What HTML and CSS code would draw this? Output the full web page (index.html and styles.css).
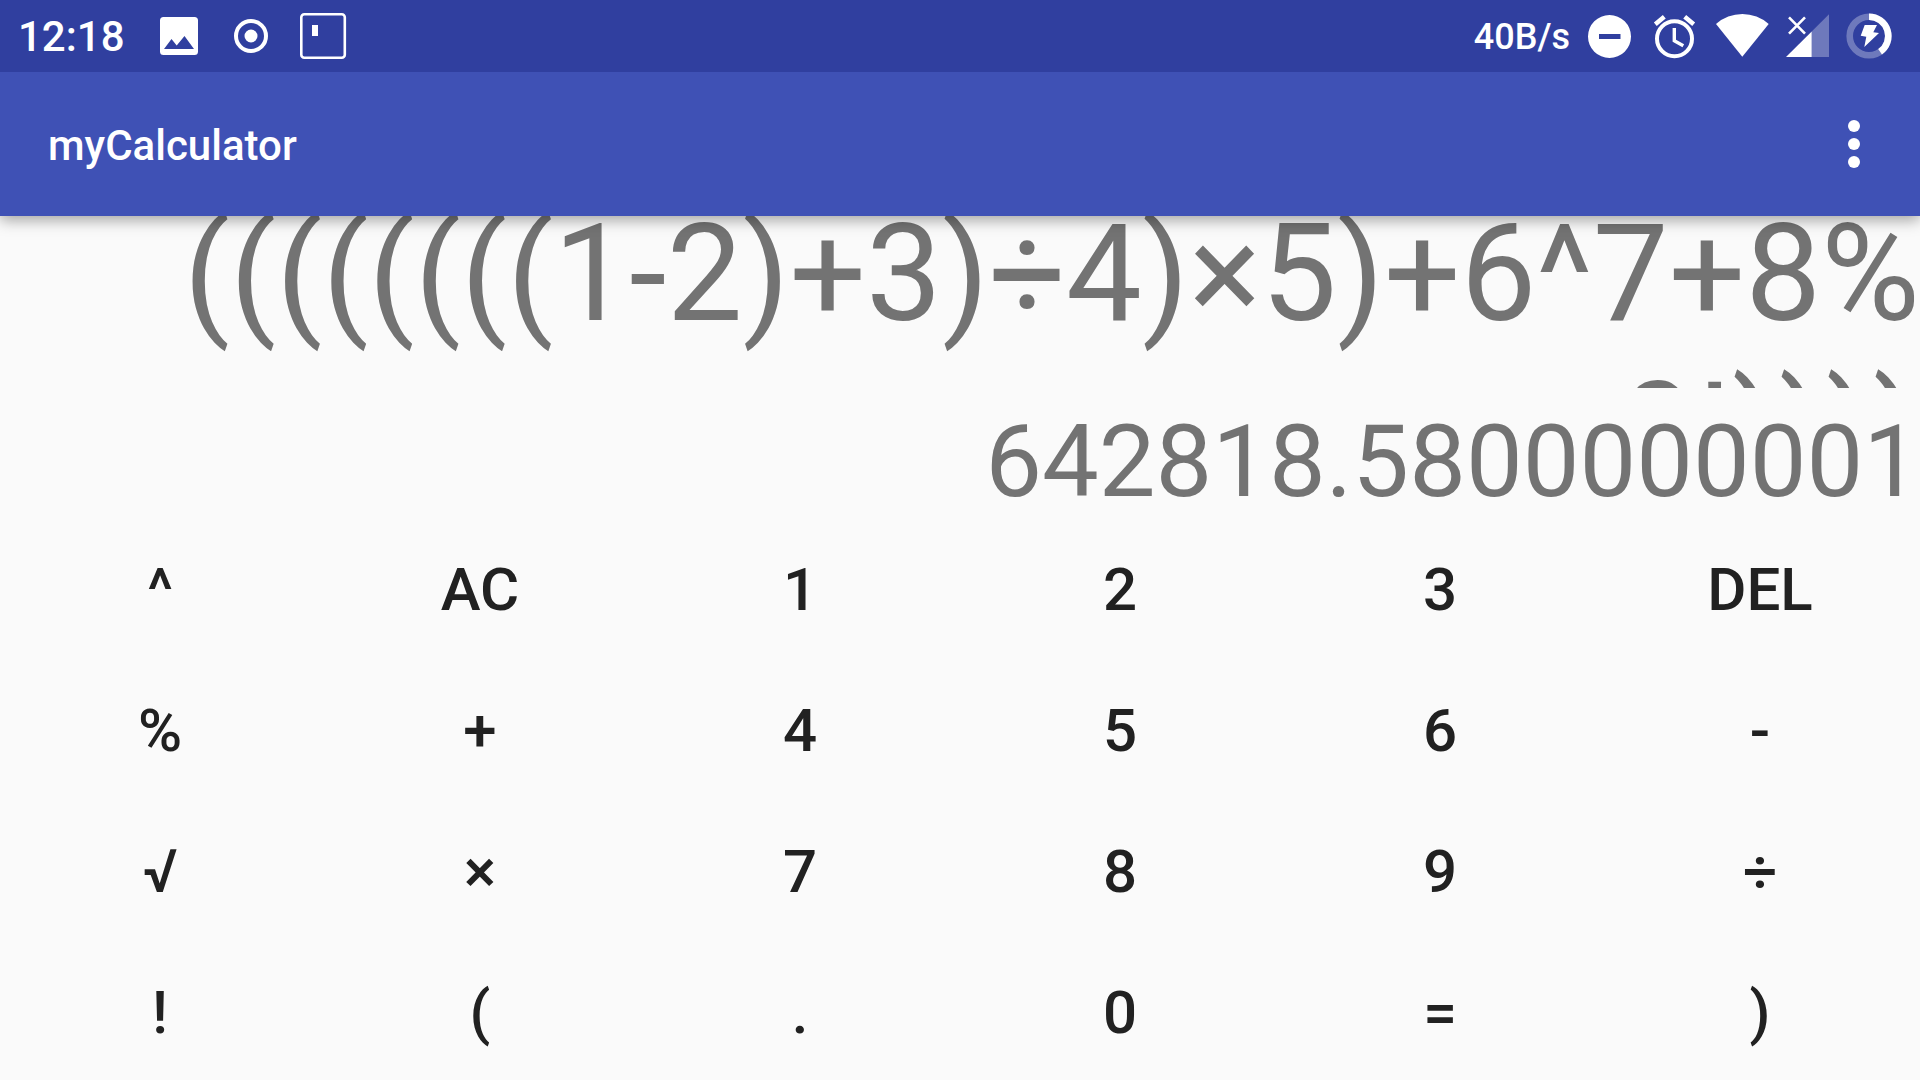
FILE: index.html
```html
<!DOCTYPE html>
<html lang="en">
<head>
<meta charset="utf-8">
<meta name="viewport" content="width=device-width, initial-scale=1">
<title>myCalculator</title>
<link rel="stylesheet" href="styles.css">
</head>
<body>
<div class="status-bar">
  <div class="status-group">
    <time class="clock">12:18</time>
    <div class="notifications">
      <svg class="notification-icon" viewBox="0 0 72 72" aria-hidden="true"><path fill="#fff" fill-rule="evenodd" d="M20.500 17H51.500Q55 17 55 20.500V51.500Q55 55 51.500 55H20.500Q17 55 17 51.500V20.500Q17 17 20.500 17ZM21 49H51L41.500 36L33.700 45.500L28.500 39Z"/></svg>
      <svg class="notification-icon" viewBox="0 0 72 72" aria-hidden="true"><circle cx="36" cy="36" r="15" fill="none" stroke="#fff" stroke-width="4"/><circle cx="36" cy="36" r="6.500" fill="#fff"/></svg>
      <svg class="notification-icon" viewBox="0 0 72 72" aria-hidden="true"><rect x="14.300" y="14.300" width="43.500" height="43.500" rx="3" fill="none" stroke="#fff" stroke-width="2.600"/><path fill="#fff" d="M25 25h6v11h-6z"/></svg>
    </div>
  </div>
  <div class="status-group">
    <span class="speed">40B/s</span>
    <svg class="system-icon" viewBox="0 0 66 72" aria-hidden="true"><path fill="#fff" fill-rule="evenodd" d="M33.500 15a21.500 21.500 0 1 0 0 43a21.500 21.500 0 1 0 0-43ZM23 34H44.500V39H23Z"/></svg>
    <svg class="system-icon" viewBox="0 0 66 72" aria-hidden="true"><g fill="none" stroke="#fff"><circle cx="32.500" cy="38.700" r="17.500" stroke-width="4"/><path stroke-width="4.500" d="M13.300 24.300L22.300 16.700M51.700 24.300L42.700 16.700"/><path stroke-width="3.400" d="M32.300 28V40.700L41.300 45.700"/></g></svg>
    <svg class="system-icon" viewBox="0 0 66 72" aria-hidden="true"><path fill="#fff" d="M8 24A39.700 39.700 0 0 1 60.700 24L34.300 56.700Z"/></svg>
    <svg class="system-icon" viewBox="0 0 66 72" aria-hidden="true"><path fill="#fff" fill-opacity=".3" d="M37.700 31.600L55 14.300V57H37.700Z"/><path fill="#fff" d="M12 57L37.700 31.600V57Z"/><path stroke="#fff" stroke-width="2.600" d="M15 17.300L31 33.700M31 17.300L15 33.700"/></svg>
    <svg class="system-icon" viewBox="0 0 66 72" aria-hidden="true"><g fill="none" stroke="#fff" stroke-width="6.600"><circle cx="29" cy="36" r="19.300" stroke-opacity=".3"/><path d="M29 16.700A19.300 19.300 0 0 1 40.100 51.800"/></g><path fill="#fff" d="M24.700 25H37L33.300 32.300L39 33L24.300 47L26.300 36.700L20.700 35.700Z"/></svg>
  </div>
</div>
<header class="app-bar">
  <h1 class="app-title">myCalculator</h1>
  <button class="menu-button" type="button" aria-label="More options"><svg class="menu-icon" viewBox="0 0 48 60" aria-hidden="true"><g fill="#fff"><circle cx="24" cy="12" r="6"/><circle cx="24" cy="30" r="6"/><circle cx="24" cy="48" r="6"/></g></svg></button>
</header>
<main class="calculator">
  <div class="expression"><p class="expression-text">((((((((1-2)+3)÷4)×5)+6^7+8%<br>+9!))))</p></div>
  <output class="result">642818.5800000001</output>
  <div class="keypad">
    <button class="key" type="button">^</button>
    <button class="key" type="button">AC</button>
    <button class="key" type="button">1</button>
    <button class="key" type="button">2</button>
    <button class="key" type="button">3</button>
    <button class="key" type="button">DEL</button>
    <button class="key" type="button">%</button>
    <button class="key" type="button">+</button>
    <button class="key" type="button">4</button>
    <button class="key" type="button">5</button>
    <button class="key" type="button">6</button>
    <button class="key" type="button">-</button>
    <button class="key" type="button">√</button>
    <button class="key" type="button">×</button>
    <button class="key" type="button">7</button>
    <button class="key" type="button">8</button>
    <button class="key" type="button">9</button>
    <button class="key" type="button">÷</button>
    <button class="key" type="button">!</button>
    <button class="key" type="button">(</button>
    <button class="key" type="button">.</button>
    <button class="key" type="button">0</button>
    <button class="key" type="button">=</button>
    <button class="key" type="button">)</button>
  </div>
</main>
</body>
</html>
```
FILE: styles.css
```css
* {
  box-sizing: border-box;
}

body {
  display: flex;
  flex-direction: column;
  min-height: 100vh;
  margin: 0;
  background: #fafafa;
  color: #212121;
  font-family: Roboto, sans-serif;
}

.status-bar {
  position: relative;
  z-index: 2;
  display: flex;
  justify-content: space-between;
  height: 72px;
  padding: 0 14px 0 18px;
  background: #303f9f;
  color: #fff;
}

.status-group {
  display: flex;
  align-items: center;
}

.clock {
  padding-top: 2px;
  font-size: 42px;
  font-weight: 500;
  line-height: 48px;
}

.notifications {
  display: flex;
  margin-left: 18px;
}

.notification-icon {
  width: 72px;
  height: 72px;
}

.speed {
  margin-right: 6px;
  padding-top: 2px;
  font-size: 36px;
  font-weight: 500;
  line-height: 48px;
}

.system-icon {
  width: 66px;
  height: 72px;
}

.app-bar {
  position: relative;
  z-index: 1;
  display: flex;
  align-items: center;
  justify-content: space-between;
  height: 144px;
  padding: 0 42px 0 48px;
  background: #3f51b5;
  box-shadow: 0 4px 14px rgba(0, 0, 0, 0.36);
  color: #fff;
}

.app-title {
  margin: 0;
  padding-top: 4px;
  font-size: 42px;
  font-weight: 500;
  line-height: 48px;
}

.menu-button {
  display: flex;
  padding: 0;
  border: 0;
  background: none;
}

.menu-icon {
  width: 48px;
  height: 60px;
}

.calculator {
  display: flex;
  flex: 1;
  flex-direction: column;
  color: #737373;
  text-align: right;
}

.expression {
  height: 172px;
  overflow: hidden;
}

/* The expression is scrolled slightly past its first line's top. */
.expression-text {
  margin: -21px 0 0;
  font-size: 135px;
  line-height: 158px;
}

.result {
  padding-top: 14px;
  font-size: 101px;
  line-height: 120px;
}

.keypad {
  display: grid;
  flex: 1;
  grid-template-columns: repeat(6, 1fr);
  grid-auto-rows: 1fr;
  row-gap: 6px;
}

.key {
  min-width: 0;
  padding: 0;
  border: 0;
  background: none;
  color: #212121;
  font: 500 60px/70px Roboto, sans-serif;
}
```
